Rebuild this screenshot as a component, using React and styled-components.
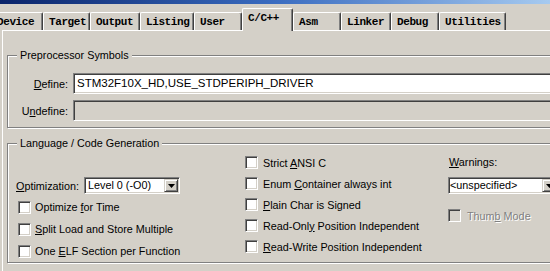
import React from "react";
import styled, { createGlobalStyle } from "styled-components";

const Global = createGlobalStyle`
  html, body { margin: 0; padding: 0; background: #d4d0c8; overflow: hidden; }
  body { font-family: "Liberation Sans", Arial, sans-serif; font-size: 10.8px; color: #000; }
`;

const Window = styled.div`
  width: 550px;
  height: 271px;
  overflow: hidden;
  background: #d4d0c8;
  display: flex;
  flex-direction: column;
`;

const TitleStrip = styled.div`
  height: 4px;
  flex: none;
  background: linear-gradient(to right, #0a246a, #3a6cc0 50%, #a6caf0);
`;

const TabBar = styled.div`
  height: 26px;
  flex: none;
  display: flex;
  align-items: flex-end;
  margin-left: -9px;
`;

const Tab = styled.div`
  box-sizing: border-box;
  flex: none;
  width: ${(p) => p.$w}px;
  height: ${(p) => (p.$active ? 23 : 18)}px;
  margin-bottom: ${(p) => (p.$active ? -1 : 0)}px;
  position: relative;
  z-index: ${(p) => (p.$active ? 2 : 1)};
  background: #d4d0c8;
  border-top: 1px solid #fff;
  border-left: 1px solid #fff;
  border-right: 1px solid #404040;
  box-shadow: inset -1px 0 0 #808080;
  border-top-left-radius: 2px;
  border-top-right-radius: 2px;
  padding: 2px 0 0 5px;
  font-family: "Liberation Mono", "DejaVu Sans Mono", monospace;
  font-weight: bold;
  font-size: 11px;
  letter-spacing: -0.4px;
  line-height: 14px;
  white-space: nowrap;
`;

const Page = styled.div`
  flex: 1;
  margin-left: 2px;
  border-top: 1px solid #fff;
  border-left: 1px solid #fff;
  padding-left: 4px;
  display: flex;
  flex-direction: column;
`;

const Group = styled.div`
  position: relative;
  margin-top: ${(p) => p.$mt}px;
  margin-right: -40px;
  border: 1px solid #808080;
  box-shadow: inset 1px 1px 0 #fff, 1px 1px 0 #fff;
  padding: ${(p) => p.$pad};
`;

const Legend = styled.span`
  position: absolute;
  top: -7px;
  left: 9px;
  padding: 0 3px;
  background: #d4d0c8;
  line-height: 13px;
  white-space: nowrap;
`;

const FieldRow = styled.div`
  display: flex;
  align-items: center;
  gap: 5px;
  & + & { margin-top: 6px; }
`;

const FieldLabel = styled.label`
  width: 60px;
  text-align: right;
  flex: none;
  white-space: nowrap;
`;

const TextBox = styled.div`
  box-sizing: border-box;
  flex: 1;
  height: 21px;
  border: 1px solid;
  border-color: #808080 #fff #fff #808080;
  box-shadow: inset 1px 1px 0 #404040, inset -1px -1px 0 #d4d0c8;
  background: ${(p) => (p.$disabled ? "#d4d0c8" : "#fff")};
  padding: 0 4px 0 3px;
  line-height: 19px;
  white-space: nowrap;
  font-size: 11.5px;
`;

const Columns = styled.div`
  display: grid;
  grid-template-columns: 229px 203px 1fr;
  align-items: start;
`;

const Col = styled.div`
  display: flex;
  flex-direction: column;
`;

const OptRow = styled.div`
  display: flex;
  align-items: center;
  gap: 5px;
  margin-top: 25px;
  margin-bottom: 2px;
`;

const CheckRow = styled.div`
  display: flex;
  align-items: center;
  height: ${(p) => p.$h || 21}px;
  margin-top: ${(p) => p.$mt || 0}px;
  padding-left: ${(p) => p.$indent || 0}px;
  gap: ${(p) => p.$gap || 5}px;
  white-space: nowrap;
  color: ${(p) => (p.$disabled ? "#808080" : "#000")};
  text-shadow: ${(p) => (p.$disabled ? "1px 1px 0 #fff" : "none")};
`;

const Box = styled.span`
  box-sizing: border-box;
  flex: none;
  width: 13px;
  height: 13px;
  border: 1px solid;
  border-color: #808080 #fff #fff #808080;
  box-shadow: inset 1px 1px 0 #404040, inset -1px -1px 0 #d4d0c8;
  background: ${(p) => (p.$disabled ? "#d4d0c8" : "#fff")};
`;

const Select = styled.div`
  box-sizing: border-box;
  flex: none;
  width: ${(p) => p.$w}px;
  height: 17px;
  border: 1px solid;
  border-color: #808080 #fff #fff #808080;
  box-shadow: inset 1px 1px 0 #404040, inset -1px -1px 0 #d4d0c8;
  background: #fff;
  display: flex;
  align-items: center;
  padding: 1px 1px 1px ${(p) => p.$pad}px;
  white-space: nowrap;
`;

const SelectText = styled.span`
  flex: 1;
  line-height: 13px;
`;

const DropButton = styled.span`
  box-sizing: border-box;
  flex: none;
  width: 14px;
  height: 13px;
  background: #d4d0c8;
  border: 1px solid;
  border-color: #d4d0c8 #404040 #404040 #d4d0c8;
  box-shadow: inset 1px 1px 0 #fff, inset -1px -1px 0 #808080;
  display: flex;
  align-items: center;
  justify-content: center;
`;

const WarnLabel = styled.div`
  height: 21px;
  line-height: 21px;
  padding-left: 1px;
`;

const U = styled.u`
  text-decoration: underline;
  text-underline-offset: 1px;
`;

const Arrow = () => (
  <svg width="7" height="4" viewBox="0 0 7 4">
    <path d="M0 0h7L3.5 4z" fill="#000" />
  </svg>
);

const tabs = [
  { label: "Device", w: 52 },
  { label: "Target", w: 47 },
  { label: "Output", w: 50 },
  { label: "Listing", w: 54 },
  { label: "User", w: 48 },
  { label: "C/C++", w: 51, active: true },
  { label: "Asm", w: 48 },
  { label: "Linker", w: 50 },
  { label: "Debug", w: 48 },
  { label: "Utilities", w: 67 },
];

export default function App() {
  return (
    <Window>
      <Global />
      <TitleStrip />
      <TabBar>
        {tabs.map((t) => (
          <Tab key={t.label} $w={t.w} $active={t.active}>
            {t.label}
          </Tab>
        ))}
      </TabBar>
      <Page>
        <Group $mt={24} $pad="17px 0 6px 0">
          <Legend>Preprocessor Symbols</Legend>
          <FieldRow>
            <FieldLabel>
              <U>D</U>efine:
            </FieldLabel>
            <TextBox>STM32F10X_HD,USE_STDPERIPH_DRIVER</TextBox>
          </FieldRow>
          <FieldRow>
            <FieldLabel>
              U<U>n</U>define:
            </FieldLabel>
            <TextBox $disabled />
          </FieldRow>
        </Group>
        <Group $mt={15} $pad="8px 0 0 8px">
          <Legend>Language / Code Generation</Legend>
          <Columns>
            <Col>
              <OptRow>
                <span>
                  <U>O</U>ptimization:
                </span>
                <Select $w={96} $pad={3}>
                  <SelectText>Level 0 (-O0)</SelectText>
                  <DropButton>
                    <Arrow />
                  </DropButton>
                </Select>
              </OptRow>
              <CheckRow $h={22} $indent={2} $gap={4}>
                <Box />
                <span>
                  Optimize <U>f</U>or Time
                </span>
              </CheckRow>
              <CheckRow $h={22} $indent={2} $gap={4}>
                <Box />
                <span>
                  <U>S</U>plit Load and Store Multiple
                </span>
              </CheckRow>
              <CheckRow $h={22} $indent={2} $gap={4}>
                <Box />
                <span>
                  One <U>E</U>LF Section per Function
                </span>
              </CheckRow>
            </Col>
            <Col>
              <CheckRow>
                <Box />
                <span>
                  Strict <U>A</U>NSI C
                </span>
              </CheckRow>
              <CheckRow>
                <Box />
                <span>
                  Enum <U>C</U>ontainer always int
                </span>
              </CheckRow>
              <CheckRow>
                <Box />
                <span>
                  <U>P</U>lain Char is Signed
                </span>
              </CheckRow>
              <CheckRow>
                <Box />
                <span>
                  Read-Onl<U>y</U> Position Independent
                </span>
              </CheckRow>
              <CheckRow>
                <Box />
                <span>
                  <U>R</U>ead-Write Position Independent
                </span>
              </CheckRow>
            </Col>
            <Col>
              <WarnLabel>
                <U>W</U>arnings:
              </WarnLabel>
              <CheckRow $h={17} $mt={4}>
                <Select $w={110} $pad={1}>
                  <SelectText>&lt;unspecified&gt;</SelectText>
                  <DropButton>
                    <Arrow />
                  </DropButton>
                </Select>
              </CheckRow>
              <CheckRow $mt={11} $gap={6} $disabled>
                <Box $disabled />
                <span>
                  Thum<U>b</U> Mode
                </span>
              </CheckRow>
            </Col>
          </Columns>
        </Group>
      </Page>
    </Window>
  );
}
